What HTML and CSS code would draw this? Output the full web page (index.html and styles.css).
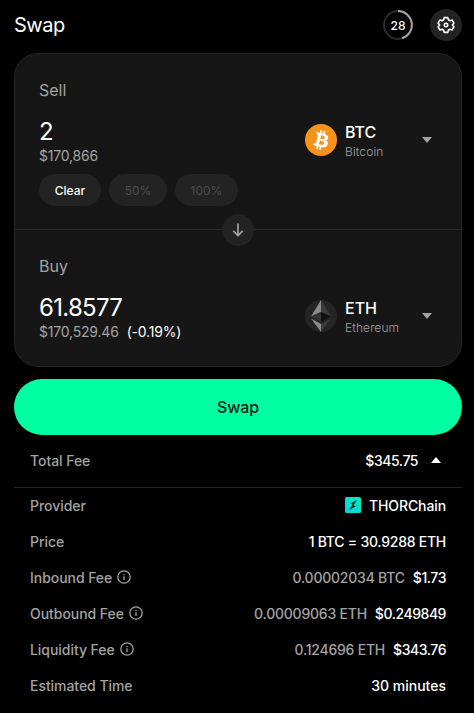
FILE: index.html
```html
<!DOCTYPE html>
<html lang="en">
<head>
    <meta charset="UTF-8">
    <meta name="viewport" content="width=device-width, initial-scale=1.0">
    <title>Swap</title>
    <link rel="stylesheet" href="styles.css">
</head>
<body>
    <header class="top-bar">
        <h1>Swap</h1>
        <div class="top-actions">
            <!-- Quote refresh countdown -->
            <div class="countdown">
                <svg class="countdown-ring" width="30" height="30" viewBox="0 0 30 30" fill="none" stroke-width="2">
                    <circle cx="15" cy="15" r="14" stroke="#2c2c2c"/>
                    <path d="M15 1A14 14 0 0 1 18.9 28.4" stroke="#a3a3a3"/>
                </svg>
                <span>28</span>
            </div>
            <button class="settings" aria-label="Settings">
                <svg width="20" height="20" viewBox="0 0 20 20" fill="none" stroke="#fff" stroke-width="1.6" stroke-linejoin="round">
                    <path d="M8.2 2.6h3.6l.6 2.2 1.5.9 2.2-.6 1.8 3.1-1.6 1.8 1.6 1.8-1.8 3.1-2.2-.6-1.5.9-.6 2.2H8.2l-.6-2.2-1.5-.9-2.2.6-1.8-3.1L3.7 10 2.1 8.2l1.8-3.1 2.2.6 1.5-.9z"/>
                    <circle cx="10" cy="10" r="1.7"/>
                </svg>
            </button>
        </div>
    </header>

    <main class="swap-card">
        <section class="asset-panel sell">
            <h2>Sell</h2>
            <div class="asset-row">
                <div class="amounts">
                    <div class="amount">2</div>
                    <div class="fiat">$170,866</div>
                </div>
                <button class="asset-select">
                    <svg width="32" height="32" viewBox="0 0 32 32">
                        <circle cx="16" cy="16" r="16" fill="#f7931a"/>
                        <path fill="#fff" d="M23.189 14.02c.314-2.096-1.283-3.223-3.465-3.975l.708-2.84-1.728-.43-.69 2.765c-.454-.114-.92-.22-1.385-.326l.695-2.783L15.596 6l-.708 2.839c-.376-.086-.746-.17-1.104-.26l.002-.009-2.384-.595-.46 1.846s1.283.294 1.256.312c.7.175.826.638.805 1.006l-.806 3.235c.048.012.11.03.18.057l-.183-.045-1.13 4.532c-.086.212-.303.531-.793.41.018.025-1.256-.313-1.256-.313l-.858 1.978 2.25.561c.418.105.828.215 1.231.318l-.715 2.872 1.727.43.708-2.84c.472.127.93.245 1.378.357l-.706 2.828 1.728.43.715-2.866c2.948.558 5.164.333 6.097-2.333.752-2.146-.037-3.385-1.588-4.192 1.13-.26 1.98-1.003 2.207-2.538zm-3.95 5.538c-.533 2.147-4.148.986-5.32.695l.95-3.805c1.172.293 4.929.872 4.37 3.11zm.535-5.569c-.487 1.953-3.495.96-4.47.717l.86-3.45c.975.243 4.118.696 3.61 2.733z"/>
                    </svg>
                    <span class="asset-text">
                        <span class="ticker">BTC</span>
                        <span class="asset-name">Bitcoin</span>
                    </span>
                    <svg class="caret" width="10" height="6" viewBox="0 0 10 6"><path d="M0 0h10L5 6z" fill="#a3a3a3"/></svg>
                </button>
            </div>
            <div class="presets">
                <button class="preset clear">Clear</button>
                <button class="preset half" disabled>50%</button>
                <button class="preset full" disabled>100%</button>
            </div>
        </section>

        <div class="divider">
            <button class="flip" aria-label="Switch assets">
                <svg width="16" height="16" viewBox="0 0 16 16" fill="none" stroke="#a3a3a3" stroke-width="1.7">
                    <path d="M8 1.5v12M3.3 8.8L8 13.500l4.700-4.700"/>
                </svg>
            </button>
        </div>

        <section class="asset-panel buy">
            <h2>Buy</h2>
            <div class="asset-row">
                <div class="amounts">
                    <div class="amount">61.8577</div>
                    <div class="fiat"><span>$170,529.46</span> <span class="impact">(-0.19%)</span></div>
                </div>
                <button class="asset-select">
                    <svg width="32" height="32" viewBox="0 0 32 32">
                        <circle cx="16" cy="16" r="16" fill="#252525"/>
                        <path d="M16 0L6 16.5l10-4.5z" fill="#8b8b8b"/>
                        <path d="M16 0l10 16.5L16 12z" fill="#3b3b3b"/>
                        <path d="M16 12L6 16.5 16 22z" fill="#343434"/>
                        <path d="M16 12l10 4.5L16 22z" fill="#111"/>
                        <path d="M6 18.5L16 32v-8z" fill="#8b8b8b"/>
                        <path d="M26 18.5L16 32v-8z" fill="#3b3b3b"/>
                    </svg>
                    <span class="asset-text">
                        <span class="ticker">ETH</span>
                        <span class="asset-name">Ethereum</span>
                    </span>
                    <svg class="caret" width="10" height="6" viewBox="0 0 10 6"><path d="M0 0h10L5 6z" fill="#a3a3a3"/></svg>
                </button>
            </div>
        </section>
    </main>

    <button class="swap-button">Swap</button>

    <div class="fee-total">
        <span class="label">Total Fee</span>
        <span class="value">
            <span class="usd">$345.75</span>
            <svg class="caret-up" width="10" height="6" viewBox="0 0 10 6"><path d="M0 6h10L5 0z" fill="#fff"/></svg>
        </span>
    </div>

    <div class="fee-list">
        <div class="fee-row">
            <span class="label">Provider</span>
            <span class="value">
                <svg width="16" height="16" viewBox="0 0 16 16">
                    <defs>
                        <linearGradient id="thor" x1="0" y1="1" x2="1" y2="0">
                            <stop offset="0" stop-color="#00d2e6"/>
                            <stop offset="1" stop-color="#00edb8"/>
                        </linearGradient>
                    </defs>
                    <rect width="16" height="16" rx="1.5" fill="url(#thor)"/>
                    <path d="M12 3L6 6.2l2.2 2.2zM4 13l6.600-3.400L7.700 7.400z" fill="#06231f"/>
                </svg>
                <span class="provider">THORChain</span>
            </span>
        </div>
        <div class="fee-row">
            <span class="label">Price</span>
            <span class="value"><span class="price">1 BTC = 30.9288 ETH</span></span>
        </div>
        <div class="fee-row">
            <span class="label">Inbound Fee
                <svg width="14" height="14" viewBox="0 0 14 14" fill="none" stroke="#a3a3a3" stroke-width="1.3"><circle cx="7" cy="7" r="6.2"/><path d="M7 6.2V10M7 3.9v1.3"/></svg>
            </span>
            <span class="value"><span class="crypto">0.00002034 BTC</span><span class="usd">$1.73</span></span>
        </div>
        <div class="fee-row">
            <span class="label">Outbound Fee
                <svg width="14" height="14" viewBox="0 0 14 14" fill="none" stroke="#a3a3a3" stroke-width="1.3"><circle cx="7" cy="7" r="6.2"/><path d="M7 6.2V10M7 3.9v1.3"/></svg>
            </span>
            <span class="value"><span class="crypto">0.00009063 ETH</span><span class="usd">$0.249849</span></span>
        </div>
        <div class="fee-row">
            <span class="label">Liquidity Fee
                <svg width="14" height="14" viewBox="0 0 14 14" fill="none" stroke="#a3a3a3" stroke-width="1.3"><circle cx="7" cy="7" r="6.2"/><path d="M7 6.2V10M7 3.9v1.3"/></svg>
            </span>
            <span class="value"><span class="crypto">0.124696 ETH</span><span class="usd">$343.76</span></span>
        </div>
        <div class="fee-row">
            <span class="label">Estimated Time</span>
            <span class="value"><span>30 minutes</span></span>
        </div>
    </div>
</body>
</html>
```

FILE: styles.css
```css
* {
    box-sizing: border-box;
}

body {
    margin: 0;
    padding: 8px 12px 0 14px;
    background-color: #000;
    color: #fff;
    font-family: Inter, sans-serif;
    font-size: 14px;
}

button {
    font: inherit;
    color: inherit;
    border: none;
    padding: 0;
    background: none;
    cursor: pointer;
}

svg {
    display: block;
    flex: none;
}

h1, h2 {
    margin: 0;
    font-weight: 400;
}

.top-bar {
    display: flex;
    justify-content: space-between;
    align-items: center;
    height: 34px;
}

.top-bar h1 {
    font-size: 20px;
    letter-spacing: -0.5px;
}

.top-actions {
    display: flex;
    align-items: center;
    gap: 17px;
}

.countdown {
    display: grid;
    place-items: center;
    font-size: 12px;
    font-weight: 500;
}

.countdown > * {
    grid-area: 1 / 1;
}

.settings {
    display: flex;
    align-items: center;
    justify-content: center;
    width: 32px;
    height: 32px;
    border-radius: 50%;
    background-color: #232323;
}

/* Sell and buy panels */
.swap-card {
    height: 314px;
    margin-top: 11px;
    border: 1px solid #252525;
    border-radius: 24px;
    background-color: #161616;
}

.asset-panel {
    padding: 24px;
}

.asset-panel.sell {
    height: 175px;
}

.asset-panel h2 {
    font-size: 16px;
    line-height: 24px;
    color: #a3a3a3;
}

.asset-row {
    display: flex;
    justify-content: space-between;
    align-items: center;
    height: 48px;
    margin-top: 14px;
}

.amounts {
    padding-top: 3px;
}

.amount {
    font-size: 24px;
    line-height: 29px;
    letter-spacing: -0.7px;
}

.fiat {
    display: flex;
    gap: 8px;
    line-height: 20px;
    letter-spacing: -0.2px;
    color: #a3a3a3;
}

.impact {
    color: #fff;
}

.asset-select {
    display: flex;
    align-items: center;
    width: 132px;
    text-align: left;
}

.asset-text {
    display: flex;
    flex-direction: column;
    flex: 1;
    margin-left: 8px;
}

.ticker {
    font-size: 16px;
    line-height: 22px;
    font-weight: 500;
}

.asset-name {
    font-size: 12px;
    line-height: 17px;
    font-weight: 300;
    letter-spacing: 0.1px;
    color: #a3a3a3;
}

.caret {
    margin-right: 5px;
}

.presets {
    display: flex;
    gap: 8px;
    margin-top: 10px;
}

.preset {
    height: 32px;
    border-radius: 16px;
    background-color: #232323;
    font-size: 12px;
    font-weight: 500;
}

.preset:disabled {
    color: #4d4d4d;
    font-weight: 400;
}

.clear {
    width: 62px;
}

.half {
    width: 58px;
}

.full {
    width: 63px;
}

.divider {
    display: flex;
    justify-content: center;
    align-items: center;
    height: 1px;
    background-color: #2c2c2c;
}

.flip {
    display: flex;
    align-items: center;
    justify-content: center;
    flex: none;
    width: 32px;
    height: 32px;
    border-radius: 50%;
    background-color: #232323;
}

.swap-button {
    width: 100%;
    height: 56px;
    margin-top: 12px;
    border-radius: 28px;
    background-color: #00ffa3;
    color: #161616;
    font-size: 16px;
    font-weight: 500;
    letter-spacing: -0.2px;
}

/* Fee breakdown */
.fee-total,
.fee-row {
    display: flex;
    justify-content: space-between;
    align-items: center;
    padding: 0 16px;
}

.fee-total {
    height: 53px;
    padding-bottom: 2px;
    border-bottom: 1px solid #252525;
}

.fee-list {
    margin-top: -1px;
}

.fee-row {
    height: 36px;
}

.label,
.value {
    display: flex;
    align-items: center;
    font-weight: 500;
}

.label {
    gap: 5px;
    letter-spacing: -0.05px;
    color: #a3a3a3;
}

.value {
    gap: 8px;
}

.usd {
    letter-spacing: -0.45px;
}

.provider {
    letter-spacing: -0.1px;
}

.price {
    letter-spacing: -0.25px;
}

.crypto {
    letter-spacing: -0.22px;
    color: #a3a3a3;
}

.caret-up {
    margin: 0 5px;
}
```
